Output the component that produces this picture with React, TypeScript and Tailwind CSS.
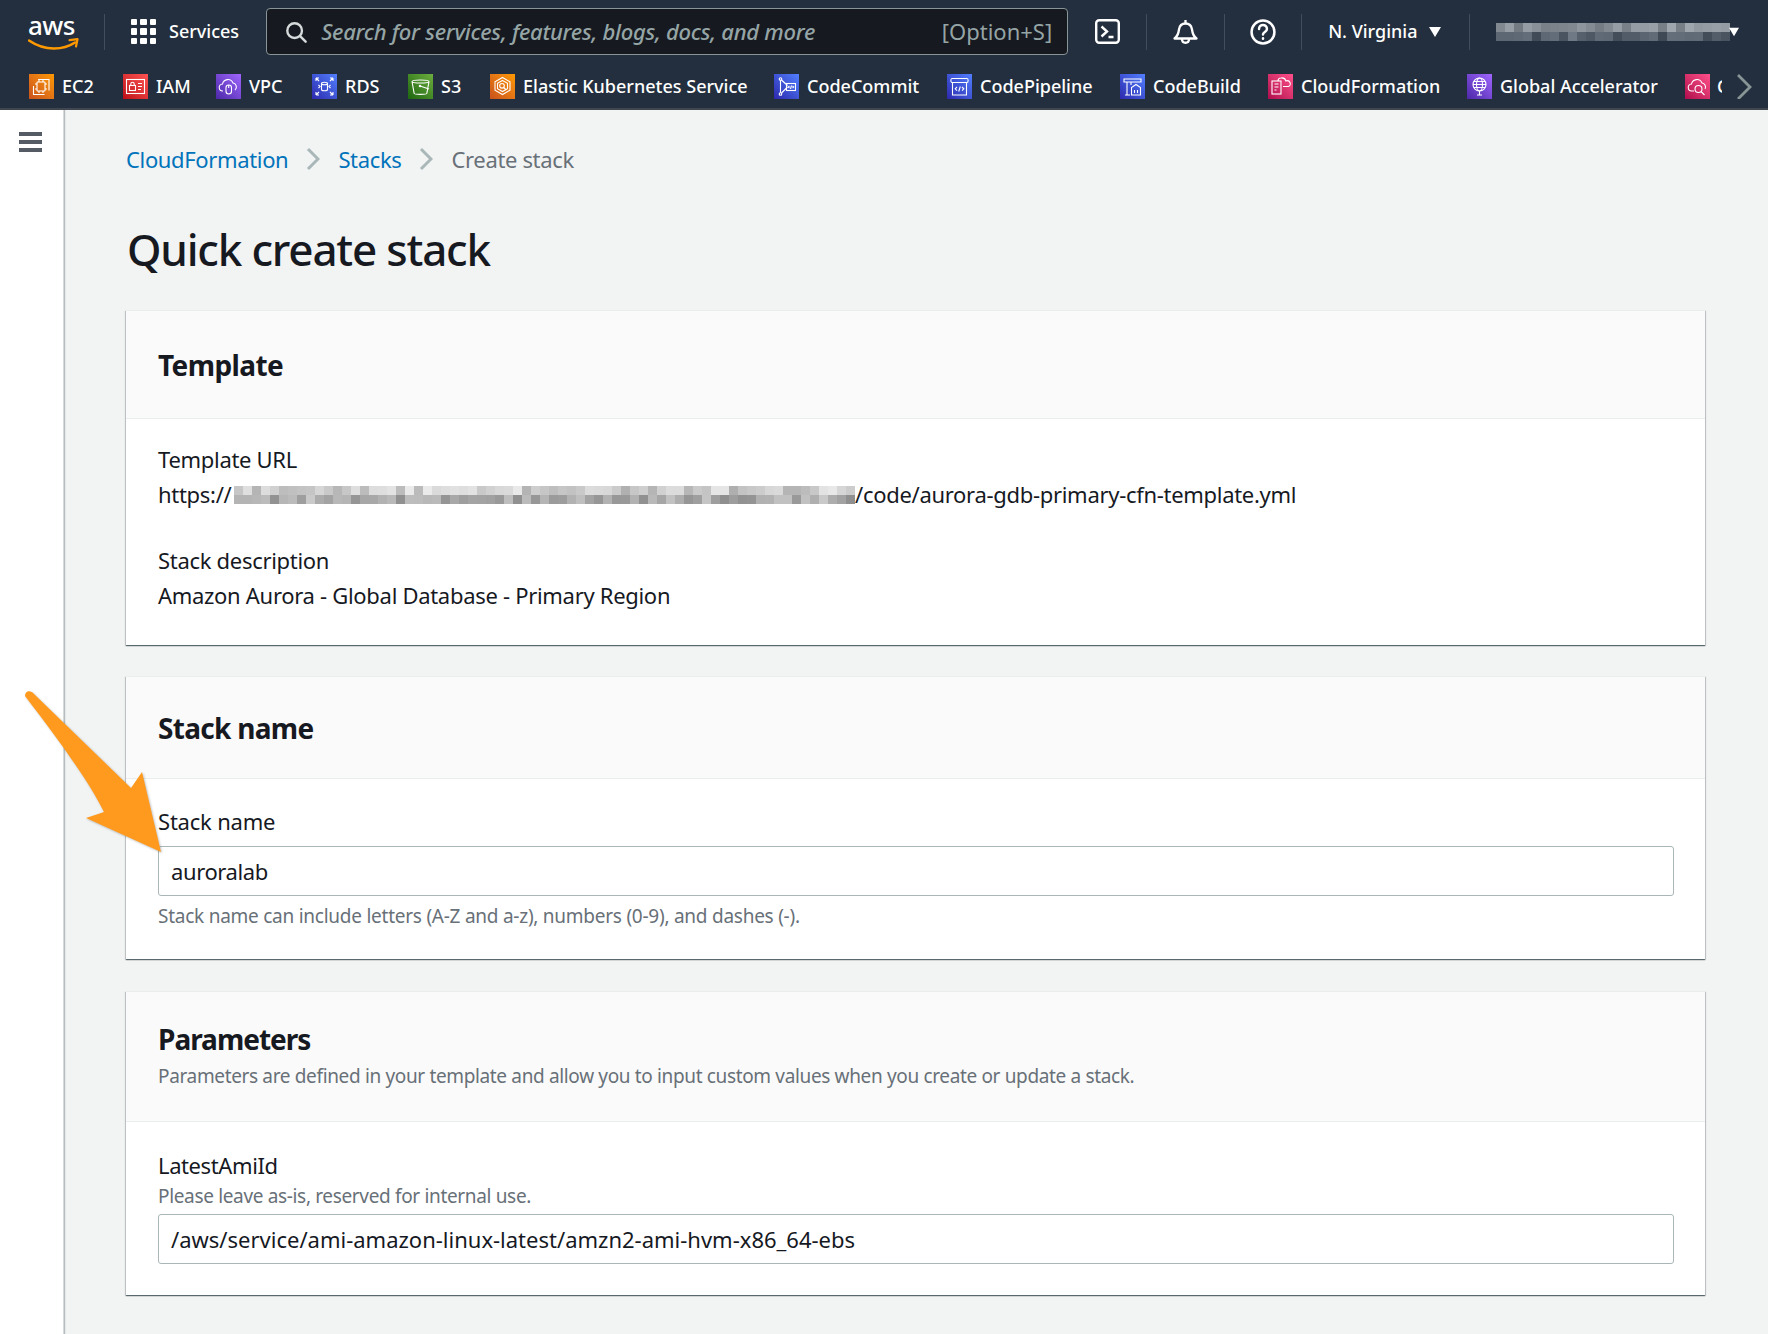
import { ReactNode } from "react";

const font = "font-['Noto_Sans',sans-serif]";

// seeded noise for the pixelated (redacted) bits of the screenshot
function noise(i: number) {
  const x = Math.sin(i * 12.9898 + 4.1) * 43758.5453;
  return x - Math.floor(x);
}

type Rgb = [number, number, number];

function Pixelated({ cols, cell, top, bottom, spread }: { cols: number; cell: number; top: Rgb; bottom: Rgb; spread: number }) {
  return (
    <div className="flex flex-col">
      {[top, bottom].map((base, r) => (
        <div key={r} className="flex">
          {Array.from({ length: cols }).map((_, c) => {
            const n = (noise(c * 3 + r * 101) - 0.5) * spread;
            const color = base.map((v) => Math.round(v + n)).join(",");
            return <div key={c} style={{ width: cell, height: cell, background: `rgb(${color})` }} />;
          })}
        </div>
      ))}
    </div>
  );
}

function AwsLogo() {
  return (
    <div className="relative h-[36px] w-[52px]">
      <span className="absolute left-[0px] top-[-7px] text-[26px] font-medium leading-[36px] tracking-[-0.5px] text-white">aws</span>
      <svg viewBox="0 0 52 14" className="absolute left-0 top-[23px] h-[14px] w-[52px]" fill="none">
        <path d="M1 3.500C9 9 18 11.500 26 11.500C33 11.500 41 9.500 47 5.500" stroke="#f90" strokeWidth="2.600" strokeLinecap="round" />
        <path d="M41.500 3.200L49.500 2.200L48 9.500" stroke="#f90" strokeWidth="2.200" strokeLinejoin="round" strokeLinecap="round" />
      </svg>
    </div>
  );
}

function GridIcon() {
  return (
    <div className="grid h-[25px] w-[25px] grid-cols-3 gap-[3px]">
      {Array.from({ length: 9 }).map((_, i) => (
        <div key={i} className="rounded-[1px] bg-white" />
      ))}
    </div>
  );
}

const glyphs: Record<string, ReactNode> = {
  ec2: (
    <>
      <rect x="8" y="8" width="8" height="9" rx="0.5" />
      <path d="M10 6v2M14 6v2M10 17v2M14 17v2M6 10h2M6 15h2M16 10h2M16 15h2" />
      <path d="M9 5.500h11v11" />
      <path d="M4.500 12v8.500h11" />
    </>
  ),
  iam: (
    <>
      <rect x="3.500" y="5.500" width="18" height="14" />
      <rect x="6.500" y="11.500" width="6" height="5" />
      <path d="M7.800 11.500v-1.500a1.700 1.700 0 0 1 3.400 0v1.500M15 9.500h4M15 12.500h4M15 15.500h3" />
    </>
  ),
  vpc: (
    <>
      <path d="M7 17a3.500 3.500 0 0 1-.5-7 5.500 5.500 0 0 1 10.500-1 4 4 0 0 1 2 7" />
      <rect x="10" y="11" width="5.500" height="9" rx="2.700" />
      <path d="M12.700 11v3" />
    </>
  ),
  rds: (
    <>
      <path d="M4 4l3 3M4 4h3M4 4v3M21 4l-3 3M21 4h-3M21 4v3M4 21l3-3M4 21h3M4 21v-3M21 21l-3-3M21 21h-3M21 21v-3" />
      <ellipse cx="12.500" cy="9.500" rx="3" ry="1.300" />
      <path d="M9.500 9.500v6c0 .8 1.300 1.300 3 1.300s3-.5 3-1.300v-6M6.500 11l1.500 1.500-1.500 1.500M18.500 11l-1.500 1.500 1.500 1.500" />
    </>
  ),
  s3: (
    <>
      <path d="M4 7.500c0-2 17-2 17 0M4 7.500c0 2 17 2 17 0M4 7.500l2.200 12c.2 1.200 12.400 1.200 12.600 0l2.200-12" />
      <path d="M12 12l9 3" />
      <circle cx="12" cy="12" r="0.700" />
    </>
  ),
  eks: (
    <>
      <path d="M12.500 3.500l7.500 4.300v8.400l-7.500 4.300L5 16.200V7.800z" />
      <path d="M12.500 6.500l5 2.800v5.400l-5 2.800-5-2.800V9.300z" />
      <circle cx="12" cy="11.800" r="2.300" />
      <path d="M13.700 13.500l2.500 2.500" />
    </>
  ),
  commit: (
    <>
      <circle cx="6.500" cy="5" r="1.300" />
      <circle cx="6.500" cy="20" r="1.300" />
      <path d="M6.500 6.300v12.400M7.500 6l6 5.500M13.500 13l-6 6" />
      <rect x="12.500" y="9.500" width="9" height="7" />
      <path d="M15.500 12l-1.200 1 1.200 1M18.500 12l1.200 1-1.200 1M17.500 11.500l-1 3.500" />
    </>
  ),
  pipeline: (
    <>
      <path d="M5 4.500h15c1.500 0 1.500 4 0 4H5c-1.500 0-1.500-4 0-4z" />
      <path d="M5.500 8.500V21h14V8.500" />
      <path d="M10 13l-1.800 1.800L10 16.600M15 13l1.800 1.800L15 16.600M13.300 12.500l-1.600 5" />
    </>
  ),
  build: (
    <>
      <path d="M4 5h17v3H4zM7 8v13M5 21h5M11 8v3" />
      <path d="M11.500 21v-7.500l4.500-3 4.500 3V21z" />
      <path d="M14.500 16v3M17.500 16v3" />
    </>
  ),
  cfn: (
    <>
      <rect x="4" y="7" width="9" height="13" />
      <path d="M6.500 10h4M6.500 13h4M6.500 16h2" />
      <path d="M10 7a3 3 0 0 1 3-3 4.500 4.500 0 0 1 5 3 3 3 0 0 1 2.500 5.500H15" />
    </>
  ),
  ga: (
    <>
      <circle cx="12.500" cy="10.500" r="6.500" />
      <ellipse cx="12.500" cy="10.500" rx="3" ry="6.500" />
      <path d="M6 10.500h13M7 7.500h11M7 13.500h11M12.500 17v4M10 21h5" />
    </>
  ),
  cw: (
    <>
      <path d="M9 17H7a3.500 3.500 0 0 1-.5-7 5.500 5.500 0 0 1 10.500-1 4 4 0 0 1 3 6" />
      <circle cx="13.500" cy="15" r="3.500" />
      <path d="M16 17.500l3.500 3.500" />
    </>
  ),
};

const services = [
  { id: "ec2", label: "EC2", bg: "from-[#c8511b] to-[#ff9900]", w: "w-[33px]" },
  { id: "iam", label: "IAM", bg: "from-[#bd0816] to-[#ff5252]", w: "w-[32px]" },
  { id: "vpc", label: "VPC", bg: "from-[#4d27a8] to-[#a166ff]", w: "w-[35px]" },
  { id: "rds", label: "RDS", bg: "from-[#2e27ad] to-[#527fff]", w: "w-[35px]" },
  { id: "s3", label: "S3", bg: "from-[#1b660f] to-[#6cae3e]", w: "w-[21px]" },
  { id: "eks", label: "Elastic Kubernetes Service", bg: "from-[#c8511b] to-[#ff9900]", w: "w-[223px]" },
  { id: "commit", label: "CodeCommit", bg: "from-[#2e27ad] to-[#527fff]", w: "w-[112px]" },
  { id: "pipeline", label: "CodePipeline", bg: "from-[#2e27ad] to-[#527fff]", w: "w-[112px]" },
  { id: "build", label: "CodeBuild", bg: "from-[#2e27ad] to-[#527fff]", w: "w-[87px]" },
  { id: "cfn", label: "CloudFormation", bg: "from-[#b0084d] to-[#ff4f8b]", w: "w-[138px]" },
  { id: "ga", label: "Global Accelerator", bg: "from-[#4d27a8] to-[#a166ff]", w: "w-[157px]" },
];

function ServiceIcon({ id, bg }: { id: string; bg: string }) {
  return (
    <div className={`h-[25px] w-[25px] shrink-0 bg-linear-to-tr ${bg}`}>
      <svg viewBox="0 0 25 25" className="h-[25px] w-[25px]" fill="none" stroke="white" strokeWidth="1.100">
        {glyphs[id]}
      </svg>
    </div>
  );
}

function TopBar() {
  return (
    <header className="h-[110px] border-b-2 border-[#414750] bg-[#232f3e] pt-2 text-white">
      <div className="flex h-[47px] items-center">
        <div className="ml-[28px]"><AwsLogo /></div>
        <div className="ml-[24px] h-9 w-px bg-[#414d5c]" />
        <div className="ml-[26px]"><GridIcon /></div>
        <span className="ml-[13px] text-[18px] font-medium">Services</span>
        <div className="ml-[27px] flex h-[47px] w-[802px] items-center rounded-[4px] border border-[#879596] bg-[#16191f] pl-[18px] pr-[15px] text-[#95a5a6]">
          <svg viewBox="0 0 24 24" className="h-[22px] w-[22px]" fill="none" stroke="#d5dbdb" strokeWidth="2.600" strokeLinecap="round">
            <circle cx="10.500" cy="10.500" r="8" />
            <path d="M16.500 16.500l6 6" />
          </svg>
          <span className="ml-[14px] flex-1 text-[22px] font-medium italic tracking-[-0.27px]">Search for services, features, blogs, docs, and more</span>
          <span className="text-[22px]">[Option+S]</span>
        </div>
        <svg viewBox="0 0 25 25" className="ml-[27px] h-[25px] w-[25px]" fill="none" stroke="white" strokeWidth="2.400">
          <rect x="1.200" y="1.200" width="22.600" height="22.600" rx="3" />
          <path d="M6.500 7.500l5.500 5-5.500 5M13.500 18h5" />
        </svg>
        <div className="ml-[26px] h-9 w-px bg-[#414d5c]" />
        <svg viewBox="0 0 25 25" className="ml-[26px] h-[27px] w-[25px]" fill="none" stroke="white" strokeWidth="2.300" strokeLinejoin="round">
          <path d="M1.500 19.500c3.500-2.500 4-5 4.500-9 .5-3.500 3-6 6.500-6s6 2.500 6.500 6c.5 4 1 6.500 4.500 9z" />
          <path d="M9 20c0 5 7 5 7 0M12.500 1v3.500" />
        </svg>
        <div className="ml-[26px] h-9 w-px bg-[#414d5c]" />
        <svg viewBox="0 0 25 25" className="ml-[25px] h-[26px] w-[26px]" fill="none" stroke="white" strokeWidth="2.400" strokeLinecap="round">
          <circle cx="12.500" cy="12.500" r="11" />
          <path d="M8.700 9.500c0-5 7.600-5 7.600 0 0 3-3.800 3-3.800 5.500" />
          <path d="M12.500 18.500v.5" />
        </svg>
        <div className="ml-[25px] h-9 w-px bg-[#414d5c]" />
        <span className="ml-[26px] text-[18px] font-medium">N. Virginia</span>
        <svg viewBox="0 0 12 10" className="ml-[11px] h-[10px] w-[12px]" fill="white">
          <path d="M0 0h12L6 10z" />
        </svg>
        <div className="ml-[28px] h-9 w-px bg-[#414d5c]" />
        <div className="ml-[26px]">
          <Pixelated cols={26} cell={9} top={[135, 142, 150]} bottom={[85, 96, 108]} spread={50} />
        </div>
        <svg viewBox="0 0 12 10" className="ml-[-1px] h-[10px] w-[10px]" fill="white">
          <path d="M0 0h12L6 10z" />
        </svg>
      </div>
      <div className="relative mt-[19px] flex h-[25px] items-center overflow-hidden pl-[29px]">
        {services.map((s) => (
          <div key={s.id} className="mr-[28px] flex shrink-0 items-center gap-[8px]">
            <ServiceIcon id={s.id} bg={s.bg} />
            <span className={`${s.w} whitespace-nowrap text-[18px] font-medium`}>{s.label}</span>
          </div>
        ))}
        <div className="flex shrink-0 items-center gap-[7px]">
          <ServiceIcon id="cw" bg="from-[#b0084d] to-[#ff4f8b]" />
          <span className="w-[5px] overflow-hidden text-[18px] font-medium">C</span>
        </div>
        <svg viewBox="0 0 16 26" className="ml-[14px] h-[26px] w-[16px] shrink-0" fill="none" stroke="#879596" strokeWidth="2.800">
          <path d="M2 1l12 12L2 25" />
        </svg>
      </div>
    </header>
  );
}

function Card({ header, children, className }: { header: ReactNode; children: ReactNode; className: string }) {
  return (
    <section className={`border-t border-[#eaeded] bg-white shadow-[0_1px_1px_0_rgba(0,28,36,0.5),1px_1px_1px_0_rgba(0,28,36,0.15),-1px_1px_1px_0_rgba(0,28,36,0.15)] ${className}`}>
      {header}
      {children}
    </section>
  );
}

function Chevron() {
  return (
    <svg viewBox="0 0 14 24" className="mx-[18px] h-[24px] w-[14px]" fill="none" stroke="#aab7b8" strokeWidth="3">
      <path d="M2 2l10 10L2 22" />
    </svg>
  );
}

function Arrow() {
  return (
    <svg viewBox="0 0 180 180" className="absolute left-0 top-[680px] h-[180px] w-[180px] drop-shadow-[1px_1px_1px_rgba(0,0,0,0.25)]">
      <path
        d="M25 16 C25 10 31 10 34 14 L131 108 L142 92 L161 172 L86 138 L104 132 C88 100 60 62 25 16 Z"
        fill="#ff9a1f"
      />
    </svg>
  );
}

const boxClass = "flex h-[50px] items-center rounded-[3px] border border-[#aab7b8] bg-white px-[12px] text-[22px] text-[#16191f]";

export default function App() {
  return (
    <div className={`relative h-[1334px] overflow-hidden bg-[#f2f3f3] ${font} text-[#16191f]`}>
      <TopBar />
      <div className="flex">
        <aside className="h-[1224px] w-[64px] shrink-0 border-r border-[#d5dbdb] bg-white pt-[22px] pl-[19px] shadow-[1px_0_1px_0_rgba(0,28,36,0.25)]">
          <div className="flex h-[20px] w-[23px] flex-col justify-between">
            <div className="h-[4px] bg-[#545b64]" />
            <div className="h-[4px] bg-[#545b64]" />
            <div className="h-[4px] bg-[#545b64]" />
          </div>
        </aside>
        <main className="flex-1 pl-[62px] pr-[63px]">
          <nav className="mt-[34px] flex h-[30px] items-center text-[22px] tracking-[-0.35px]">
            <span className="text-[#0073bb]">CloudFormation</span>
            <Chevron />
            <span className="text-[#0073bb]">Stacks</span>
            <Chevron />
            <span className="text-[#687078]">Create stack</span>
          </nav>
          <h1 className="mt-[45px] h-[60px] pl-px text-[44px] font-medium leading-[60px] tracking-[-1.2px]">Quick create stack</h1>
          <div className="mt-[31px]">
            <Card
              className="h-[335px]"
              header={
                <div className="flex h-[108px] items-center border-b border-[#eaeded] bg-[#fafafa] px-[32px]">
                  <h2 className="text-[28px] font-bold tracking-[-0.6px]">Template</h2>
                </div>
              }
            >
              <div className="px-[32px] pt-[23px] text-[22px] leading-[35px] tracking-[-0.3px]">
                <div>Template URL</div>
                <div className="flex items-center">
                  <span className="w-[76px]">https://</span>
                  <Pixelated cols={69} cell={9} top={[205, 205, 205]} bottom={[172, 172, 172]} spread={60} />
                  <span>/code/aurora-gdb-primary-cfn-template.yml</span>
                </div>
                <div className="mt-[31px]">Stack description</div>
                <div>Amazon Aurora - Global Database - Primary Region</div>
              </div>
            </Card>
            <Card
              className="mt-[31px] h-[283px]"
              header={
                <div className="flex h-[102px] items-center border-b border-[#eaeded] bg-[#fafafa] px-[32px]">
                  <h2 className="text-[28px] font-bold tracking-[-0.7px]">Stack name</h2>
                </div>
              }
            >
              <div className="pl-[32px] pr-[31px] pt-[26px]">
                <div className="h-[41px] text-[22px] leading-[32px] tracking-[-0.2px]">Stack name</div>
                <div className={`${boxClass} tracking-[-0.4px]`}>auroralab</div>
                <div className="mt-[7px] text-[19px] leading-[26px] tracking-[-0.25px] text-[#687078]">
                  Stack name can include letters (A-Z and a-z), numbers (0-9), and dashes (-).
                </div>
              </div>
            </Card>
            <Card
              className="mt-[32px] h-[304px]"
              header={
                <div className="h-[130px] border-b border-[#eaeded] bg-[#fafafa] px-[32px] pt-[27px]">
                  <h2 className="text-[28px] font-bold leading-[40px] tracking-[-1px]">Parameters</h2>
                  <p className="mt-[2px] text-[19px] leading-[30px] tracking-[-0.35px] text-[#687078]">
                    Parameters are defined in your template and allow you to input custom values when you create or update a stack.
                  </p>
                </div>
              }
            >
              <div className="pl-[32px] pr-[31px] pt-[26px]">
                <div className="text-[22px] leading-[34px] tracking-[-0.4px]">LatestAmiId</div>
                <div className="mb-[4px] text-[19px] leading-[28px] tracking-[-0.34px] text-[#687078]">Please leave as-is, reserved for internal use.</div>
                <div className={boxClass}>/aws/service/ami-amazon-linux-latest/amzn2-ami-hvm-x86_64-ebs</div>
              </div>
            </Card>
          </div>
        </main>
      </div>
      <Arrow />
    </div>
  );
}
